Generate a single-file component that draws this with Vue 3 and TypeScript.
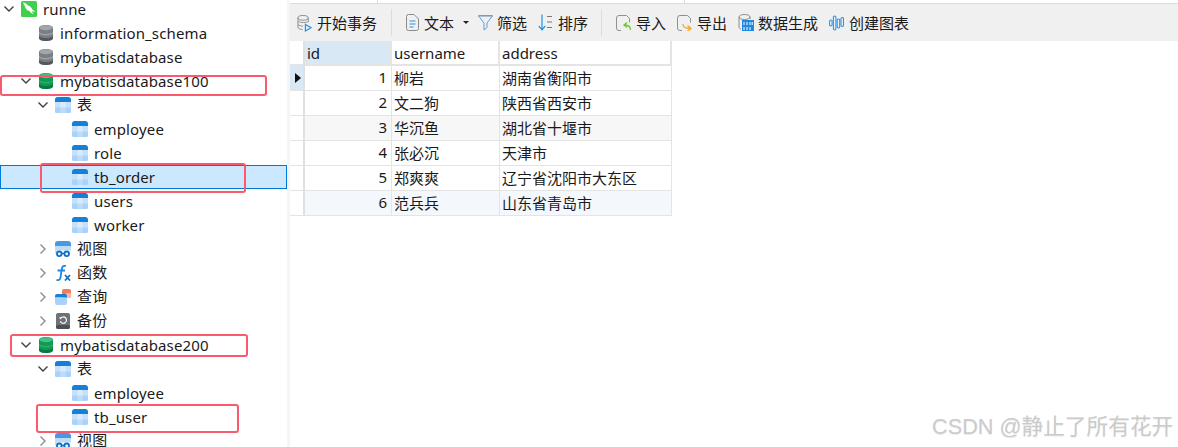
<script setup lang="ts">
interface TreeRow { level: number; label: string; chevron: '' | 'down' | 'right'; icon: string; selected?: boolean }
const rows: TreeRow[] = [
  { level: 0, label: 'runne', chevron: 'down', icon: 'mysql' },
  { level: 1, label: 'information_schema', chevron: '', icon: 'dbgray' },
  { level: 1, label: 'mybatisdatabase', chevron: '', icon: 'dbgray' },
  { level: 1, label: 'mybatisdatabase100', chevron: 'down', icon: 'dbgreen' },
  { level: 2, label: '表', chevron: 'down', icon: 'table' },
  { level: 3, label: 'employee', chevron: '', icon: 'table' },
  { level: 3, label: 'role', chevron: '', icon: 'table' },
  { level: 3, label: 'tb_order', chevron: '', icon: 'table', selected: true },
  { level: 3, label: 'users', chevron: '', icon: 'table' },
  { level: 3, label: 'worker', chevron: '', icon: 'table' },
  { level: 2, label: '视图', chevron: 'right', icon: 'view' },
  { level: 2, label: '函数', chevron: 'right', icon: 'func' },
  { level: 2, label: '查询', chevron: 'right', icon: 'query' },
  { level: 2, label: '备份', chevron: 'right', icon: 'backup' },
  { level: 1, label: 'mybatisdatabase200', chevron: 'down', icon: 'dbgreen' },
  { level: 2, label: '表', chevron: 'down', icon: 'table' },
  { level: 3, label: 'employee', chevron: '', icon: 'table' },
  { level: 3, label: 'tb_user', chevron: '', icon: 'table' },
  { level: 2, label: '视图', chevron: 'right', icon: 'view' },
]
const people = [
  { id: 1, username: '柳岩', address: '湖南省衡阳市', tone: '' },
  { id: 2, username: '文二狗', address: '陕西省西安市', tone: '' },
  { id: 3, username: '华沉鱼', address: '湖北省十堰市', tone: 'gray' },
  { id: 4, username: '张必沉', address: '天津市', tone: '' },
  { id: 5, username: '郑爽爽', address: '辽宁省沈阳市大东区', tone: '' },
  { id: 6, username: '范兵兵', address: '山东省青岛市', tone: 'blue' },
]
</script>

<template>
  <div class="page">
    <svg class="sprite" aria-hidden="true">
      <defs>
        <symbol id="i-table" viewBox="0 0 16 16">
          <rect width="16" height="16" rx="3" fill="#c4e0fb" />
          <path d="M3 0h10a3 3 0 0 1 3 3v2H0V3a3 3 0 0 1 3-3z" fill="#1580d8" />
          <rect x="5.500" y="5" width="5" height="5.500" fill="#dcecfc" />
          <rect x="0" y="10.500" width="5.500" height="5.500" rx="1.500" fill="#a8d2fa" />
          <rect x="10.500" y="10.500" width="5.500" height="5.500" rx="1.500" fill="#a8d2fa" />
          <rect x="5.500" y="10.500" width="5" height="5.500" fill="#bcdcfb" />
        </symbol>
        <symbol id="i-dbgray" viewBox="0 0 16 16">
          <path d="M1 3c0-1.700 3-3 7-3s7 1.300 7 3v10c0 1.700-3 3-7 3s-7-1.300-7-3z" fill="#7b7f84" />
          <ellipse cx="8" cy="2.800" rx="6.500" ry="2.500" fill="#a2a5a9" />
          <path d="M1 7c1.500 1.400 4 2 7 2s5.500-.6 7-2v1.200C13.500 9.600 11 10.200 8 10.200S2.500 9.600 1 8.200z" fill="#a2a5a9" />
          <path d="M1 11c1.500 1.400 4 2 7 2s5.500-.6 7-2v2c0 1.700-3 3-7 3s-7-1.300-7-3z" fill="#55595e" />
        </symbol>
        <symbol id="i-dbgreen" viewBox="0 0 16 16">
          <path d="M1 3c0-1.700 3-3 7-3s7 1.300 7 3v10c0 1.700-3 3-7 3s-7-1.300-7-3z" fill="#0f9a55" />
          <ellipse cx="8" cy="2.800" rx="6.500" ry="2.500" fill="#46c083" />
          <path d="M1 7c1.500 1.400 4 2 7 2s5.500-.6 7-2v1.200C13.500 9.600 11 10.200 8 10.200S2.500 9.600 1 8.200z" fill="#2cae6c" />
          <path d="M1 11c1.500 1.400 4 2 7 2s5.500-.6 7-2v2c0 1.700-3 3-7 3s-7-1.300-7-3z" fill="#067a40" />
        </symbol>
        <symbol id="i-mysql" viewBox="0 0 16 16">
          <rect width="16" height="16" rx="1.500" fill="#41cf4e" />
          <path d="M2 1.500c2.500.3 3.800 1.500 5 3 1.500.4 3 1.500 4 3.300.5.900 1.500 2 3 2.700-1 .6-2.300 .2-3.300-.4.200 1 .8 2 1.800 3-1.600-.2-3-1.200-4-3C6 9.700 4.400 7.500 4 5.500 3.200 4.300 2.400 3 2 1.500z" fill="#fff" />
        </symbol>
        <symbol id="i-view" viewBox="0 0 16 16">
          <path d="M3 0h10a3 3 0 0 1 3 3v2H0V3a3 3 0 0 1 3-3z" fill="#4a97e4" />
          <path d="M0 5h16v4.500H0z" fill="#bcdcfb" />
          <path d="M0 9.500h3v4H2a2 2 0 0 1-2-2z" fill="#bcdcfb" />
          <circle cx="4.300" cy="12.800" r="2.300" fill="#fff" stroke="#0f6fc4" stroke-width="1.800" />
          <circle cx="11.700" cy="12.800" r="2.300" fill="#fff" stroke="#0f6fc4" stroke-width="1.800" />
          <path d="M6.500 12.500h3" stroke="#0f6fc4" stroke-width="1.500" />
        </symbol>
        <symbol id="i-func" viewBox="0 0 16 16">
          <path d="M11 .9C8.500 .3 7.200 1.500 6.800 4L5.500 12.500c-.3 2-1.500 3-4 2.500M2.500 5.500h7.500" fill="none" stroke="#1e88e0" stroke-width="1.800" />
          <path d="M10 10l5 5.500M15 10l-5 5.500" fill="none" stroke="#1170c0" stroke-width="1.800" />
        </symbol>
        <symbol id="i-query" viewBox="0 0 16 16">
          <rect x="7" y="0" width="9" height="9" rx="2" fill="#f47a5e" />
          <rect x="11" y="4" width="5" height="5" rx="1" fill="#fab7a5" />
          <path d="M2 5h8a2 2 0 0 1 2 2v1.500H0V7a2 2 0 0 1 2-2z" fill="#1580d8" />
          <path d="M0 8.500h12V14a2 2 0 0 1-2 2H2a2 2 0 0 1-2-2z" fill="#a8d2fa" />
        </symbol>
        <symbol id="i-backup" viewBox="0 0 16 16">
          <rect x="1" width="14" height="16" rx="2" fill="#6e7276" />
          <rect x="1" y="12" width="14" height="4" rx="2" fill="#4c5054" />
          <path d="M5.500 5.500A3.200 3.200 0 1 1 5.300 8.300" fill="none" stroke="#fff" stroke-width="1.100" />
          <path d="M4 4.200l2.500 .2-.9 2.200z" fill="#fff" />
        </symbol>
      </defs>
    </svg>

    <aside class="tree">
      <div v-for="(row, i) in rows" :key="i" class="row" :class="{ selected: row.selected, cjk: row.level === 2 }" :style="{ paddingLeft: row.level * 17 + 'px' }">
        <span class="slot">
          <svg v-if="row.chevron === 'down'" width="12" height="8" viewBox="0 0 12 8"><path d="M1.500 1.500 6 6l4.500-4.500" fill="none" stroke="#404040" stroke-width="1.400" /></svg>
          <svg v-else-if="row.chevron === 'right'" width="8" height="12" viewBox="0 0 8 12"><path d="M1.500 1.500 6 6l-4.500 4.500" fill="none" stroke="#8c8c8c" stroke-width="1.400" /></svg>
        </span>
        <svg class="ico" width="16" height="16"><use :href="'#i-' + row.icon" /></svg>
        <span class="label">{{ row.label }}</span>
      </div>
    </aside>

    <main class="main">
      <div class="tabs"><span class="tab one"></span><span class="tab two"></span></div>
      <div class="toolbar">
        <span class="tool">
          <svg width="15" height="18" viewBox="0 0 16 18"><g fill="none" stroke="#8a8a8a" stroke-width="1"><ellipse cx="6.500" cy="3.500" rx="5.500" ry="2.500" /><path d="M1 3.500v10c0 1.300 2 2.300 5 2.500M12 3.500V8M1 7c1 1.500 7 2 10.500 .8M1 10.500c1 1.200 3 1.800 5.500 1.800" /></g><path d="M9 10.500l6 3.500-6 3.500z" fill="none" stroke="#2490e8" stroke-width="1.300" /></svg>
          开始事务
        </span>
        <span class="sep s1"></span>
        <span class="tool t-text">
          <svg width="13" height="17" viewBox="0 0 13 17"><path d="M2.500 .5h5.500l4.500 4.500v9.500a2 2 0 0 1-2 2h-8a2 2 0 0 1-2-2v-12a2 2 0 0 1 2-2z" fill="none" stroke="#8a8a8a" /><path d="M3.500 7h6M3.500 10h6M3.500 13h4" stroke="#2490e8" stroke-width="1.200" /></svg>
          文本
        </span>
        <span class="caret"></span>
        <span class="tool t-filter">
          <svg width="15" height="16" viewBox="0 0 15 16"><path d="M.5 .8h14L9 8v4.500l-3 2.500V8z" fill="none" stroke="#5a9fdc" stroke-width="1" /><path d="M.5 .8h14" stroke="#8a8a8a" /></svg>
          筛选
        </span>
        <span class="tool t-sort">
          <svg width="15" height="17" viewBox="0 0 15 17"><path d="M4 .5v15M.8 12l3.200 3.800L7.200 12" fill="none" stroke="#2490e8" stroke-width="1.200" /><path d="M9 2.500h5M9 8h5M9 13.500h5" stroke="#777" stroke-width="1.200" /></svg>
          排序
        </span>
        <span class="sep s2"></span>
        <span class="tool t-import">
          <svg width="15" height="16" viewBox="0 0 15 16"><path d="M5 15.500H3a2.500 2.500 0 0 1-2.500-2.500V3A2.500 2.500 0 0 1 3 .5h7.500l3 3v4" fill="none" stroke="#909090" /><path d="M14.500 15c0-3.500-2-5-6-5M11 7.500 8 10l3 2.500" fill="none" stroke="#6ec829" stroke-width="1.300" /></svg>
          导入
        </span>
        <span class="tool t-export">
          <svg width="15" height="16" viewBox="0 0 15 16"><path d="M5 15.500H3a2.500 2.500 0 0 1-2.500-2.500V3A2.500 2.500 0 0 1 3 .5h7.500l3 3v4" fill="none" stroke="#909090" /><path d="M6 9c0 3 2 4.500 7 4.500M10.500 10.500l3.500 3-3.500 2.500" fill="none" stroke="#f5a623" stroke-width="1.300" /></svg>
          导出
        </span>
        <span class="tool t-gen">
          <svg width="16" height="17" viewBox="0 0 16 17"><g fill="none" stroke="#8a8a8a"><ellipse cx="6.500" cy="3" rx="5.500" ry="2.500" /><path d="M1 3v10c0 1 .8 1.800 2 2.200M12 3v2" /></g><rect x="4" y="6" width="12" height="11" fill="#1e88e0" /><path d="M6 8v3M9 8v3M12 8v3M14.200 8v3M6 13v3M9 13v3M12 13v3" stroke="#fff" stroke-width="1" /></svg>
          数据生成
        </span>
        <span class="tool t-chart">
          <svg width="15" height="16" viewBox="0 0 15 16"><g fill="none" stroke="#2e94e8" stroke-width="1.100"><rect x=".6" y="5" width="2.500" height="6" rx="1.200" /><rect x="4.400" y="1" width="2.500" height="14" rx="1.200" /><rect x="8.200" y="4" width="2.500" height="9" rx="1.200" /><rect x="12" y="2.500" width="2.500" height="9" rx="1.200" /></g></svg>
          创建图表
        </span>
      </div>

      <div class="grid">
        <div class="gcell mark head"></div>
        <div class="gcell head active">id</div>
        <div class="gcell head">username</div>
        <div class="gcell head">address</div>
        <template v-for="(p, i) in people" :key="p.id">
          <div class="gcell mark" :class="{ current: i === 0 }"><span v-if="i === 0" class="pointer"></span></div>
          <div class="gcell num body" :class="p.tone">{{ p.id }}</div>
          <div class="gcell body" :class="p.tone">{{ p.username }}</div>
          <div class="gcell body" :class="p.tone">{{ p.address }}</div>
        </template>
      </div>
    </main>

    <div class="box b1"></div>
    <div class="box b2"></div>
    <div class="box b3"></div>
    <div class="box b4"></div>
    <div class="watermark">CSDN @静止了所有花开</div>
  </div>
</template>

<style>
html, body { margin: 0; background: #fff; }
</style>

<style scoped>
.page {
  position: relative;
  width: 1178px;
  height: 447px;
  overflow: hidden;
  display: flex;
  background: #fff;
  font-family: "Noto Sans", "Noto Sans CJK SC", sans-serif;
  font-size: 15px;
  color: #1a1a1a;
}
.sprite { position: absolute; width: 0; height: 0; }
.tree {
  width: 287px;
  flex: none;
  margin-top: -3px;
}
.row {
  height: 24px;
  box-sizing: border-box;
  display: flex;
  align-items: center;
  white-space: nowrap;
}
.row.selected {
  background: #cce8ff;
  outline: 1px solid #0078d7;
  outline-offset: -1px;
}
.slot {
  width: 21px;
  flex: none;
  display: flex;
  justify-content: center;
  padding-right: 4px;
  box-sizing: border-box;
}
.ico { flex: none; }
.label { margin-left: 6px; letter-spacing: .13px; }
.row.cjk .label { margin-bottom: 3px; }
.main {
  flex: 1;
  border-left: 3px solid #f5f5f5;
  min-width: 0;
}
.tabs {
  height: 3px;
  border-bottom: 1px solid #dcdcdc;
  display: flex;
}
.tab { height: 3px; border-right: 1px solid #dcdcdc; }
.tab.one { width: 87px; }
.tab.two { width: 306px; }
.toolbar {
  height: 37px;
  background: #f0f0f0;
  display: flex;
  align-items: center;
  padding-left: 7px;
}
.tool {
  display: flex;
  align-items: center;
  gap: 5px;
  white-space: nowrap;
}
.sep { width: 1px; height: 27px; background: #dcdcdc; }
.s1 { margin: 0 14px; }
.s2 { margin: 0 14px 0 13px; }
.caret {
  margin: 0 9px;
  border-left: 3px solid transparent;
  border-right: 3px solid transparent;
  border-top: 3px solid #222;
}
.t-filter { gap: 4px; margin-right: 11px; }
.t-import, .t-export { margin-right: 11px; }
.t-gen { gap: 4px; margin-right: 11px; }
.grid {
  display: grid;
  grid-template-columns: 15px 87px 108px 172px;
  grid-auto-rows: 25px;
  width: 382px;
}
.gcell {
  box-sizing: border-box;
  border-right: 1px solid #e4e4e4;
  border-bottom: 1px solid #e4e4e4;
  padding: 0 2px;
  display: flex;
  align-items: center;
  white-space: nowrap;
  background: #fff;
}
.gcell.body { padding-bottom: 2px; }
.gcell.head { border-right-width: 2px; border-bottom-width: 2px; }
.gcell.active { background: #d8e8f5; }
.gcell.mark { border-right: 2px solid #e0e0e0; padding: 0; }
.gcell.current { background: #d8e8f5; }
.gcell.num { justify-content: flex-end; padding-right: 4px; }
.gcell.gray { background: #f7f7f7; }
.gcell.blue { background: #f4f8fc; }
.pointer {
  margin-left: 5px;
  border-top: 5px solid transparent;
  border-bottom: 5px solid transparent;
  border-left: 6px solid #111;
}
.box {
  position: absolute;
  box-sizing: border-box;
  border: 2px solid #f95a6e;
  border-radius: 3px;
}
.b1 { left: 0; top: 75px; width: 267px; height: 21px; }
.b2 { left: 40px; top: 163px; width: 206px; height: 30px; }
.b3 { left: 10px; top: 334px; width: 238px; height: 23px; }
.b4 { left: 36px; top: 404px; width: 203px; height: 29px; }
.watermark {
  position: absolute;
  left: 932px;
  top: 412px;
  font-family: "Liberation Sans", "Noto Sans CJK SC", sans-serif;
  font-size: 21.700px;
  color: #cbcbcb;
  text-shadow: 0 1px 1px rgba(0, 0, 0, .08);
  white-space: nowrap;
  line-height: 30px;
}
</style>
